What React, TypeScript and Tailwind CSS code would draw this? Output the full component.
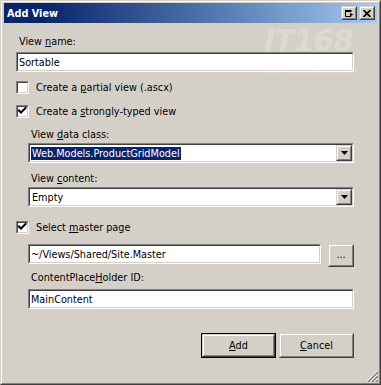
import type { ReactNode } from 'react';

// classic win2k dialog bits
function Sunken({ className = '', children }: { className?: string; children?: ReactNode }) {
  return (
    <div className={`border border-t-[#808080] border-l-[#808080] border-b-white border-r-white ${className}`}>
      <div className="h-full border border-t-[#404040] border-l-[#404040] border-b-[#D4D0C8] border-r-[#D4D0C8] bg-white flex items-center">
        {children}
      </div>
    </div>
  );
}

function Raised({ className = '', children }: { className?: string; children?: ReactNode }) {
  return (
    <div className={`border border-t-[#D4D0C8] border-l-[#D4D0C8] border-b-[#404040] border-r-[#404040] bg-[#D4D0C8] ${className}`}>
      <div className="h-full border border-t-white border-l-white border-b-[#808080] border-r-[#808080] flex items-center justify-center">
        {children}
      </div>
    </div>
  );
}

function CheckBox({ checked, children }: { checked?: boolean; children: ReactNode }) {
  return (
    <div className="flex items-center h-[13px]">
      <Sunken className="w-[13px] h-[13px] shrink-0">
        {checked && (
          <svg width="9" height="9" viewBox="0 0 9 9" className="block">
            <path d="M1 3.5 L3 5.5 L7.5 1" stroke="black" strokeWidth="2" fill="none" strokeLinecap="square" />
          </svg>
        )}
      </Sunken>
      <span className="ml-[7px]">{children}</span>
    </div>
  );
}

function Select({ children }: { children: ReactNode }) {
  return (
    <Sunken className="h-[20px] ml-[12px]">
      <div className="flex-1 pl-[1px] flex items-center">{children}</div>
      <Raised className="w-[16px] h-[16px] shrink-0">
        <svg width="7" height="4" viewBox="0 0 7 4" className="block">
          <path d="M0 0 H7 L3.5 4 Z" fill="black" />
        </svg>
      </Raised>
    </Sunken>
  );
}

export default function App() {
  return (
    <div className="w-[381px] h-[385px] bg-[#D4D0C8] border border-t-[#D4D0C8] border-l-[#D4D0C8] border-r-[#404040] border-b-[#404040] font-['DejaVu_Sans',sans-serif] text-[9.7px] leading-[13px] text-black overflow-hidden">
      <div className="h-full border border-t-white border-l-white border-r-[#808080] border-b-[#808080] px-[2px] pt-[1px] flex flex-col relative">

        {/* title bar */}
        <div className="h-[20px] shrink-0 bg-linear-to-r from-[#0A246A] from-10% to-[#A6CAF0] flex items-center pl-[3px] pr-[2px]">
          <span className="flex-1 font-bold text-white text-[9.7px]">Add View</span>
          <Raised className="w-[16px] h-[14px]">
            <svg width="9" height="7" viewBox="0 0 9 7" className="block">
              <path d="M0.5 1 H6 M0.5 0.5 V6.5 H6 V4.5" stroke="black" strokeWidth="1" fill="none" />
              <path d="M0 0 H6.5 V2 H0 Z" fill="black" />
              <path d="M5 3 L8.5 4.5 L5 6 Z" fill="black" />
            </svg>
          </Raised>
          <Raised className="w-[16px] h-[14px] ml-[2px]">
            <svg width="8" height="7" viewBox="0 0 8 7" className="block">
              <path d="M0.5 0 L7.5 7 M7.5 0 L0.5 7" stroke="black" strokeWidth="1.6" />
            </svg>
          </Raised>
        </div>

        {/* watermark */}
        <div className="absolute left-[262px] top-[22px] pointer-events-none select-none text-white/20 italic font-bold text-[30px] leading-[34px] tracking-[-1px]">IT168</div>
        <div className="absolute left-[260px] top-[62px] pointer-events-none select-none text-white/15 italic font-bold text-[11px] leading-[13px]">www.it168.com</div>

        <div className="pl-[12px] pr-[23px] flex flex-col">
          <div className="mt-[12px] pl-[3px]">View <u>n</u>ame:</div>
          <Sunken className="mt-[4px] h-[20px]">
            <span className="pl-[1px]">Sortable</span>
          </Sunken>

          <div className="mt-[9px]">
            <CheckBox>Create a <u>p</u>artial view (.ascx)</CheckBox>
          </div>
          <div className="mt-[11px]">
            <CheckBox checked>Create a <u>s</u>trongly-typed view</CheckBox>
          </div>

          <div className="mt-[10px] pl-[15px]">View <u>d</u>ata class:</div>
          <div className="mt-[2px]">
            <Select>
              <span className="bg-[#0A246A] text-white px-[1px]">Web.Models.ProductGridModel</span>
            </Select>
          </div>

          <div className="mt-[9px] pl-[15px]">View <u>c</u>ontent:</div>
          <div className="mt-[2px]">
            <Select>
              <span className="px-[1px]">Empty</span>
            </Select>
          </div>

          <div className="mt-[14px]">
            <CheckBox checked>Select <u>m</u>aster page</CheckBox>
          </div>

          <div className="mt-[10px] ml-[12px] flex items-start gap-[7px]">
            <Sunken className="flex-1 h-[20px]">
              <span className="pl-[1px]">~/Views/Shared/Site.Master</span>
            </Sunken>
            <Raised className="w-[26px] h-[23px]">
              <span className="leading-none pb-[1px]">...</span>
            </Raised>
          </div>

          <div className="mt-[4px] pl-[15px]">ContentPlace<u>H</u>older ID:</div>
          <Sunken className="mt-[5px] ml-[12px] h-[20px]">
            <span className="pl-[1px]">MainContent</span>
          </Sunken>

          <div className="mt-[24px] flex justify-end gap-[3px]">
            <div className="border border-black">
              <Raised className="w-[73px] h-[23px]">
                <span><u>A</u>dd</span>
              </Raised>
            </div>
            <Raised className="w-[75px] h-[25px]">
              <span><u>C</u>ancel</span>
            </Raised>
          </div>
        </div>

        {/* size grip */}
        <svg width="12" height="12" viewBox="0 0 12 12" className="absolute right-[1px] bottom-[1px]">
          <path d="M11 1 L1 11 M11 5 L5 11 M11 9 L9 11" stroke="white" strokeWidth="1" />
          <path d="M12 2 L2 12 M12 6 L6 12 M12 10 L10 12" stroke="#808080" strokeWidth="1.4" />
        </svg>
      </div>
    </div>
  );
}
